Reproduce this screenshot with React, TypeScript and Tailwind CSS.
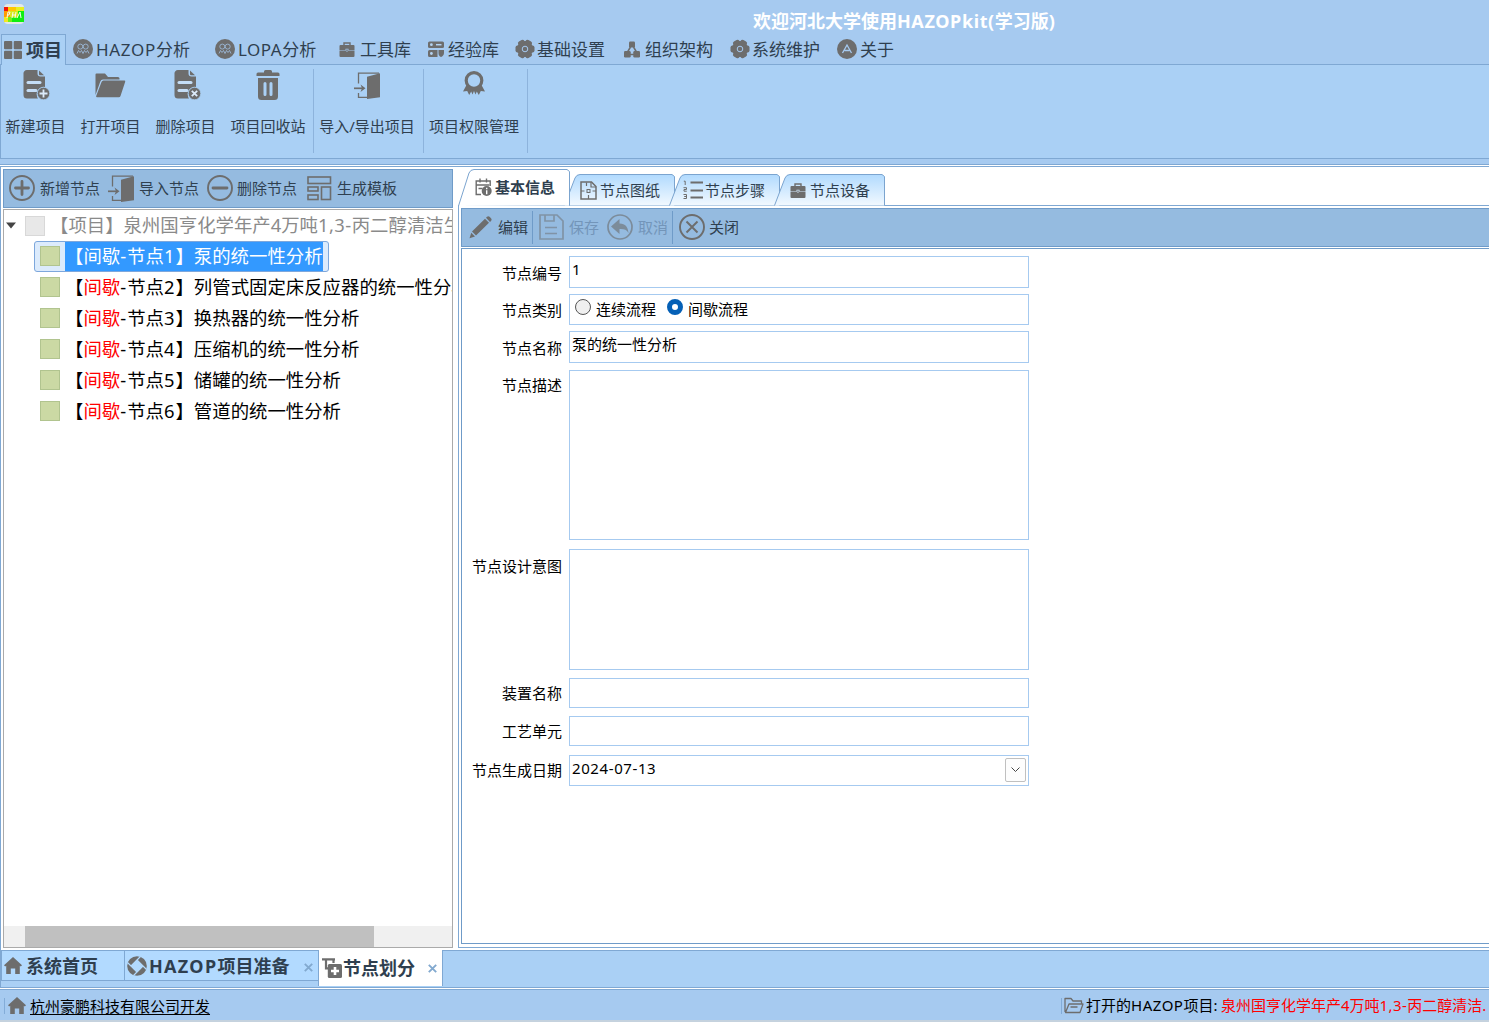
import React from "react";

const G = "#6d6d6d";
type P = { children?: React.ReactNode; className?: string };

function Svg({ w, h, vb, children, className = "" }: P & { w: number; h: number; vb?: string }) {
  return (
    <svg width={w} height={h} viewBox={vb ?? `0 0 ${w} ${h}`} fill="none" className={`block shrink-0 ${className}`}>
      {children}
    </svg>
  );
}

const AppLogo = () => (
  <Svg w={20} h={20}>
    <rect x="0" y="0" width="20" height="20" rx="4" fill="#e3e8e6" />
    <path d="M0 3h20v4H0z" fill="#ffc800" />
    <path d="M0 3h4v4H0z" fill="#f01808" />
    <path d="M12 3h8v4h-8z" fill="#e8f020" />
    <path d="M0 7h6v6H0z" fill="#ff9c00" />
    <path d="M6 7h8v6H6z" fill="#d8e81c" />
    <path d="M0 13h4v5H0z" fill="#f2e820" />
    <path d="M4 13h10v5H4z" fill="#70f01c" />
    <path d="M14 7h6v11H8v-4h6z" fill="#10ee10" />
    <path d="M3 14l1-6h2l-1 3H4M8 14l1-6M12 8l-1 6M8.500 11h3M13 14l3-6 1 6" stroke="#f4fff0" strokeWidth="1" />
  </Svg>
);
const GridIcon = () => (
  <Svg w={18} h={18}>
    <g fill={G}>
      <rect x="0" y="0" width="8.300" height="8.300" rx="1" />
      <rect x="9.700" y="0" width="8.300" height="8.300" rx="1" />
      <rect x="0" y="9.700" width="8.300" height="8.300" rx="1" />
      <rect x="9.700" y="9.700" width="8.300" height="8.300" rx="1" />
    </g>
  </Svg>
);
const PeopleIcon = () => (
  <Svg w={20} h={20}>
    <circle cx="10" cy="10" r="10" fill={G} />
    <g stroke="#a6caf0" strokeWidth="0.7">
      <circle cx="7.300" cy="7.600" r="2.500" />
      <circle cx="12.700" cy="7.600" r="2.500" />
      <path d="M4 14.500l1.500-3 1.500 2 1.500-2 1.500 3 1.500-3 1.500 2 1.500-2 1.500 3" />
    </g>
  </Svg>
);
const Toolbox = () => (
  <Svg w={16} h={15}>
    <path d="M5 3.500V1h6v2.500" stroke={G} strokeWidth="1.400" />
    <path d="M1.500 3h13a1 1 0 0 1 1 1v4h-6V6.700h-3V8h-6V4a1 1 0 0 1 1-1z" fill={G} />
    <path d="M.5 8.600h6.100l1.400 1.300 1.400-1.300h6.100V14a1 1 0 0 1-1 1h-13a1 1 0 0 1-1-1z" fill={G} />
    <path d="M7.200 7.500h1.600v1L8 9.200l-.8-.7z" fill={G} />
  </Svg>
);
const ServerIcon = () => (
  <Svg w={16} h={16}>
    <rect x="0" y="0.500" width="16" height="6.500" rx="1.500" fill={G} />
    <path d="M1.500 9h8v7h-8A1.500 1.500 0 0 1 0 14.500v-4A1.500 1.500 0 0 1 1.500 9zM10.500 9H16v3c0 2-1.500 3.500-3 4-1.500-.5-2.500-2-2.500-4z" fill={G} />
    <circle cx="3.400" cy="3.700" r="1.400" fill="#b4d3f2" />
    <circle cx="3.400" cy="12.500" r="1.400" fill="#b4d3f2" />
    <path d="M8 3.700h5.500" stroke="#b4d3f2" strokeWidth="1.500" />
  </Svg>
);
const Gear = () => (
  <Svg w={20} h={20}>
    <g fill={G}>
      <circle cx="10" cy="10" r="8" />
      <rect x="0.500" y="6.500" width="19" height="7" rx="2" />
      <rect x="0.500" y="6.500" width="19" height="7" rx="2" transform="rotate(60 10 10)" />
      <rect x="0.500" y="6.500" width="19" height="7" rx="2" transform="rotate(120 10 10)" />
    </g>
    <circle cx="10" cy="10" r="2.800" stroke="#a6caf0" strokeWidth="1" />
  </Svg>
);
const OrgIcon = () => (
  <Svg w={16} h={17}>
    <g fill={G}>
      <rect x="5" y="0.500" width="6" height="6" rx="1.200" />
      <rect x="0" y="10" width="6.700" height="6.500" rx="1.200" />
      <rect x="9.300" y="10" width="6.700" height="6.500" rx="1.200" />
    </g>
    <path d="M6.500 6L3.500 11M9.500 6l3 5M6 13.500h4" stroke={G} strokeWidth="1.500" />
  </Svg>
);
const AboutIcon = () => (
  <Svg w={20} h={20}>
    <circle cx="10" cy="10" r="10" fill={G} />
    <path d="M5.500 14L10 6l4.500 8M7.500 11.500h5" stroke="#a6caf0" strokeWidth="1.300" />
  </Svg>
);
const DocIcon = ({ del = false }) => (
  <Svg w={27} h={30}>
    <path d="M4 0h10.500v3.500A3 3 0 0 0 17.500 6.500H22V17a7.500 7.500 0 0 0-7 11.500H4a3.500 3.500 0 0 1-3.500-3.500V4A3.500 3.500 0 0 1 4 0z" fill={G} />
    <path d="M16 .5l5 4.700h-4a1 1 0 0 1-1-1z" fill={G} />
    <rect x="3.500" y="11" width="15" height="3" rx="1.500" fill="#c4ddf6" />
    <rect x="3.500" y="19" width="11" height="3" rx="1.500" fill="#c4ddf6" />
    <circle cx="20.500" cy="23.500" r="6.300" fill={G} stroke="#aad0f5" strokeWidth=".8" />
    <path d={del ? "M17.800 20.800l5.400 5.400M23.200 20.800l-5.400 5.400" : "M20.500 19.500v8M16.500 23.500h8"} stroke="#dcebfa" strokeWidth="1.800" />
  </Svg>
);
const FolderIcon = () => (
  <Svg w={31} h={25}>
    <path d="M.5 22V1.500a1 1 0 0 1 1-1H10L13 4h10a1.500 1.500 0 0 1 1.500 1.500V6.500H8a3 3 0 0 0-2.700 2z" fill={G} />
    <path d="M8.500 7.500h20.700a1 1 0 0 1 1 1.300L25.500 23a1.800 1.800 0 0 1-1.700 1.200H2.200a1 1 0 0 1-1-1.300L6.500 9a2.200 2.200 0 0 1 2-1.500z" fill={G} />
  </Svg>
);
const TrashIcon = () => (
  <Svg w={24} h={30}>
    <path d="M8 2.500V1.500A1.500 1.500 0 0 1 9.500 0h5A1.500 1.500 0 0 1 16 1.500v1h6A1.500 1.500 0 0 1 23.500 4v2H.5V4A1.500 1.500 0 0 1 2 2.500z" fill={G} />
    <path d="M2 8h20v18.500a3.500 3.500 0 0 1-3.500 3.500h-13A3.500 3.500 0 0 1 2 26.500z" fill={G} />
    <path d="M9 13.500v11M15 13.500v11" stroke="#aad0f5" strokeWidth="3" strokeLinecap="round" />
  </Svg>
);
const DoorIcon = () => (
  <Svg w={26} h={27}>
    <path d="M4.500 11.500V1.200H25M4.500 21v4.300h9" stroke={G} strokeWidth="1.300" />
    <path d="M13 4.800L26 1.200v24L13 27z" fill={G} />
    <path d="M0 16.300h9" stroke={G} strokeWidth="1.700" />
    <path d="M6.500 12.500l5 3.800-5 3.800 1.500-3.800z" fill={G} />
  </Svg>
);
const MedalIcon = () => (
  <Svg w={22} h={25}>
    <circle cx="11" cy="9.500" r="7.800" stroke={G} strokeWidth="3.200" />
    <path d="M3.800 13.500L0 20.500l4.200-.6 2 4.100 2-3.500 1.300 3 1.500-3.500 1.500 3.500 1.300-3 2 3.500 2-4.100 4.200.6-3.800-7-7.200 4z" fill={G} />
  </Svg>
);
const CircleIcon = ({ kind }: { kind: "plus" | "minus" | "x" }) => (
  <Svg w={26} h={26}>
    <circle cx="13" cy="13" r="12" stroke={G} strokeWidth="1.900" />
    {kind === "x" ? (
      <path d="M7.500 7.500l11 11M18.500 7.500l-11 11" stroke={G} strokeWidth="1.900" />
    ) : (
      <path d={kind === "plus" ? "M6.500 13h13M13 6.500v13" : "M6 13h14"} stroke={G} strokeWidth="2.800" strokeLinecap="round" />
    )}
  </Svg>
);
const TemplateIcon = () => (
  <Svg w={25} h={25}>
    <g stroke={G} strokeWidth="1.600">
      <rect x="1" y="1" width="22.500" height="6.500" />
      <rect x="1" y="11" width="10" height="4" />
      <rect x="1" y="19" width="10" height="4.500" />
      <rect x="14.500" y="11" width="9" height="12.500" />
    </g>
  </Svg>
);
const InfoDoc = () => (
  <Svg w={17} h={18}>
    <path d="M6 16.500H1.200V3h14v5M1.200 7h13M5 0.500v4M11.500 0.500v4M3.500 10.500h4" stroke={G} strokeWidth="1.400" />
    <circle cx="11.700" cy="13" r="5" fill={G} />
    <path d="M11.700 9.800v1.500M11.700 12.300v4" stroke="#fff" strokeWidth="1.400" />
  </Svg>
);
const Drawing = () => (
  <Svg w={17} h={19}>
    <path d="M1 1h10.500L16 5.500V18H1z" stroke={G} strokeWidth="1.500" />
    <path d="M11 1v5h5M6.500 1.500v3.500M1 10h3.500M12.500 10H16M8.500 14V18" stroke={G} strokeWidth="1.200" />
    <rect x="7" y="8.500" width="3" height="3" stroke={G} />
  </Svg>
);
const Steps = () => (
  <Svg w={21} h={20}>
    <path d="M7.500 2.500h12.500M7.500 10.500h12.500M7.500 17.500h12.500" stroke={G} strokeWidth="2" />
    <path d="M.8 1.200h1.400V5M.5 7.700h3v1.800H1v1.700h2.800M.5 14.500h3v4H.5M1.200 16.500h2" stroke={G} strokeWidth="1" />
  </Svg>
);
const Pencil = () => (
  <Svg w={23} h={23}>
    <path d="M17 1.800l1-1a2 2 0 0 1 2.600 0l1.400 1.400a2 2 0 0 1 0 2.700l-1 1zM16 2.800l4 4L7 19.500l-4-4zM2.300 16.700l3.700 3.700L.5 22.300z" fill={G} />
  </Svg>
);
const SaveIcon = () => (
  <Svg w={25} h={26} className="opacity-50">
    <path d="M1 1h17l6 6v18H1zM6 1v6h9V1M6 13.500h12M6 19.500h12" stroke={G} strokeWidth="1.700" />
  </Svg>
);
const UndoIcon = () => (
  <Svg w={26} h={26} className="opacity-60">
    <circle cx="13" cy="13" r="12" stroke={G} strokeWidth="1.700" />
    <path d="M4 12.500L12.500 5v4.500c6 .3 8.500 3.500 9 9.500-2-3.500-4.500-4.200-9-4v5z" fill={G} />
  </Svg>
);
const Home = () => (
  <Svg w={18} h={17}>
    <path d="M9 0l9 8.200-1.200 1.300-1-.8V17h-4.600v-5.500H6.800V17H2.200V8.700l-1 .8L0 8.200z" fill={G} />
  </Svg>
);
const Aperture = () => (
  <Svg w={20} h={20}>
    <circle cx="10" cy="10" r="9.800" fill={G} />
    <path d="M10 4L16 10 10 16 4 10z" fill="#b2daff" />
    <path d="M4 10L13.500.500M10 4L19.500 13.500M16 10L6.500 19.500M10 16L.500 6.500" stroke="#b2daff" strokeWidth="1.200" />
  </Svg>
);
const NodeIcon = () => (
  <Svg w={20} h={20}>
    <path d="M0 1.300h13M4 1v9.300h3M11.500 1v4" stroke={G} strokeWidth="2.200" />
    <rect x="5.800" y="6" width="14.200" height="14" rx="1.500" fill={G} />
    <path d="M13 9v8M9 13h8" stroke="#fff" strokeWidth="2.600" />
  </Svg>
);
const OpenFolder = () => (
  <Svg w={20} h={17}>
    <path d="M1 15V1.500h6L9 4h8.500v3M1.500 15.500L5 7h14l-3 8.500zM6.500 10h7" stroke={G} strokeWidth="1.300" strokeLinejoin="round" />
  </Svg>
);

const menus: [React.FC, React.ReactNode, string, string][] = [
  [PeopleIcon, <><span className="tracking-[0.7px]">HAZOP</span>分析</>, "w-[142px]", "gap-[3px]"],
  [PeopleIcon, <><span className="tracking-[0.5px]">LOPA</span>分析</>, "w-[124px]", "gap-[3px]"],
  [Toolbox, "工具库", "w-[89px]", "gap-[5px]"],
  [ServerIcon, "经验库", "w-[87px]", "gap-[4px]"],
  [Gear, "基础设置", "w-[109px]", "gap-[2px]"],
  [OrgIcon, "组织架构", "w-[106px]", "gap-[5px]"],
  [Gear, "系统维护", "w-[107px]", "gap-[2px]"],
  [AboutIcon, "关于", "w-[80px]", "gap-[3px]"],
];

function Action({ label, children, className = "" }: P & { label: string }) {
  return (
    <div className={`flex shrink-0 flex-col items-center ${className}`}>
      <div className="flex h-[30px] items-center">{children}</div>
      <span className="mt-[15px] leading-[22px]">{label}</span>
    </div>
  );
}

function Tab({ label, children, className = "" }: P & { label: string }) {
  return (
    <div className={`relative h-[32px] w-[111px] shrink-0 ${className}`}>
      <svg width="111" height="32" className="absolute inset-0">
        <defs>
          <linearGradient id="tabfill" x1="0" y1="0" x2="0" y2="1">
            <stop offset="0" stopColor="#b1dafe" />
            <stop offset="1" stopColor="#f2f9ff" />
          </linearGradient>
        </defs>
        <path d="M.5 31.500L11 4Q12.500.5 16 .5H108L110.500 2.500V31.500" fill="url(#tabfill)" stroke="#7ba4cf" />
      </svg>
      <div className="relative flex h-[32px] items-center">{children}<span className="leading-[20px]">{label}</span></div>
    </div>
  );
}

function Row({ label, h, mt, lp, children }: P & { label: string; h: string; mt: string; lp: string }) {
  return (
    <div className={`flex ${mt}`}>
      <span className={`w-[100px] shrink-0 text-right leading-[20px] ${lp}`}>{label}</span>
      <div className={`ml-[7px] w-[460px] shrink-0 border border-[#a6caf0] bg-white ${h}`}>{children}</div>
    </div>
  );
}

const nodes = ["列管式固定床反应器的统一性分析", "换热器的统一性分析", "压缩机的统一性分析", "储罐的统一性分析", "管道的统一性分析"];

export default function App() {
  return (
    <div className="flex h-[1022px] w-[1489px] flex-col overflow-hidden whitespace-nowrap bg-white font-['Noto_Sans','Noto_Sans_CJK_SC',sans-serif] text-[15px] text-[#2f3f4f]">
      <header className="h-[64px] shrink-0 bg-[#a6caf0]">
        <div className="flex h-[34px]">
          <div className="ml-[4px] mt-[4px] w-[749px]"><AppLogo /></div>
          <h1 className="mt-[9px] text-[18px] font-bold leading-[24px] text-white">欢迎河北大学使用<span className="tracking-[0.6px]">HAZOPkit(</span>学习版)</h1>
        </div>
        <nav className="flex text-[17px] leading-[24px]">
          <div className="relative z-10 ml-px mr-[7px] flex h-[31px] w-[65px] shrink-0 items-center gap-[4px] border border-b-0 border-[#7fa8d3] bg-[#aad0f5] pl-[2px] text-[18px] font-bold">
            <GridIcon /><span>项目</span>
          </div>
          {menus.map(([Icon, label, w, gap], i) => (
            <div key={i} className={`flex h-[30px] shrink-0 items-center ${w} ${gap}`}><Icon /><span className="pt-[2px]">{label}</span></div>
          ))}
        </nav>
      </header>

      <section className="flex h-[95px] shrink-0 border border-r-0 border-[#7fa8d3] bg-[#aad0f5] pt-[5px]">
        <Action label="新建项目" className="w-[69px]"><span className="ml-[2px]"><DocIcon /></span></Action>
        <Action label="打开项目" className="ml-[3px] w-[75px]"><FolderIcon /></Action>
        <Action label="删除项目" className="w-[75px]"><span className="ml-[3px]"><DocIcon del /></span></Action>
        <Action label="项目回收站" className="w-[90px]"><TrashIcon /></Action>
        <i className="mt-[-1px] h-[84px] w-px bg-[#8db3dc]" />
        <Action label="导入/导出项目" className="mr-[3px] w-[106px]"><DoorIcon /></Action>
        <i className="mt-[-1px] h-[84px] w-px bg-[#8db3dc]" />
        <Action label="项目权限管理" className="mr-[3px] w-[100px]"><span className="mb-[3px]"><MedalIcon /></span></Action>
        <i className="mt-[-1px] h-[84px] w-px bg-[#8db3dc]" />
      </section>
      <div className="h-[6px] shrink-0 border-b border-[#7fa8d3] bg-[#a6caf0]" />
      <div className="h-[2px] shrink-0 border-b border-[#7fa8d3]" />

      <main className="flex h-[783px] shrink-0 border-l border-[#7fa8d3]">
        <aside className="ml-[2px] mt-[2px] w-[450px] shrink-0">
          <div className="flex h-[39px] items-center border border-[#6f9bc8] bg-[#95bbe0] pb-px pl-[5px]">
            <div className="flex w-[99px] items-center gap-[5px]"><CircleIcon kind="plus" />新增节点</div>
            <div className="flex w-[99px] items-center gap-[5px]"><DoorIcon />导入节点</div>
            <div className="flex w-[100px] items-center gap-[4px]"><CircleIcon kind="minus" />删除节点</div>
            <div className="flex items-center gap-[5px]"><TemplateIcon />生成模板</div>
          </div>
          <div className="mt-px flex h-[739px] flex-col overflow-hidden border border-[#aaa] bg-white text-[18.4px] leading-[26px] text-black">
            <div className="flex h-[31px] shrink-0 items-center text-[#8a8a8a]">
              <Svg w={10} h={7} className="ml-[2px]"><path d="M0 .5h10L5 6.500z" fill="#444" /></Svg>
              <i className="ml-[9px] mr-[5px] block size-[20px] shrink-0 border border-[#d8d8d8] bg-[#e8e8e8]" />
              <span className="pb-[2px]">【项目】泉州国亨化学年产4万吨<span className="tracking-[0.45px]">1,3-</span>丙二醇清洁生产项目</span>
            </div>
            <div className="ml-[30px] flex h-[31px] w-[295px] shrink-0 items-center rounded-[3px] border border-[#7da7dc] bg-[#dcebfc]">
              <i className="mb-[2px] ml-[5px] mr-[5px] block size-[20px] shrink-0 border border-[#b1c48f] bg-[#cbd9a4]" />
              <span className="h-[29px] w-[258px] bg-[#3399ff] leading-[27px] text-white">【间歇<span className="tracking-[1px]">-</span>节点<span className="tracking-[1px]">1</span>】泵的统一性分析</span>
            </div>
            {nodes.map((n, i) => (
              <div key={n} className="flex h-[31px] shrink-0 items-center pb-[2px]">
                <i className="ml-[36px] mr-[5px] block size-[20px] shrink-0 border border-[#b1c48f] bg-[#cbd9a4]" />
                <span>【<span className="text-[#f00]">间歇</span><span className="tracking-[1px]">-</span>节点<span className="tracking-[1px]">{i + 2}</span>】{n}</span>
              </div>
            ))}
            <div className="mt-auto flex h-[21px] shrink-0 bg-[#f0f0f0]"><i className="ml-[21px] w-[349px] bg-[#c0c0c0]" /></div>
          </div>
        </aside>

        <section className="ml-[5px] min-w-0 flex-1 pt-[2px]">
          <div className="relative z-10 flex h-[37px] items-end">
            <div className="relative z-10 h-[37px] w-[112px] shrink-0">
              <svg width="112" height="37" className="absolute inset-0">
                <path d="M.5 37L11 4Q12.500.5 16 .5H109L111.500 2.500V36.500H112" fill="#fff" stroke="#7ba4cf" />
              </svg>
              <div className="relative flex h-[35px] items-center gap-[3px] pl-[17px] font-bold"><InfoDoc /><span className="leading-[20px]">基本信息</span></div>
            </div>
            <Tab label="节点图纸" className="ml-[-6px] pl-[16px]"><Drawing /><i className="w-[3px]" /></Tab>
            <Tab label="节点步骤" className="ml-[-6px] pl-[14px]"><Steps /><i className="w-px" /></Tab>
            <Tab label="节点设备" className="ml-[-6px] pl-[16px]"><Toolbox /><i className="w-[4px]" /></Tab>
            <i className="h-px flex-1 bg-[#7fa8d3]" />
          </div>
          <div className="mt-[-1px] h-[743px] border border-r-0 border-[#7fa8d3] pl-[2px] pt-[2px]">
            <div className="flex h-[39px] items-center border border-r-0 border-[#6f9bc8] bg-[#95bbe0] pb-px pl-[7px]">
              <Pencil /><span className="ml-[6px] mr-[4px]">编辑</span>
              <i className="h-[33px] w-px bg-[#6f9bc8]" />
              <div className="ml-[6px] flex w-[68px] items-center gap-[5px] text-[#7395b9]"><SaveIcon />保存</div>
              <div className="flex w-[65px] items-center gap-[5px] text-[#7395b9]"><UndoIcon />取消</div>
              <i className="h-[33px] w-px bg-[#6f9bc8]" />
              <div className="ml-[6px] flex items-center gap-[4px]"><CircleIcon kind="x" />关闭</div>
            </div>
            <div className="mt-px h-[696px] border border-r-0 border-[#6f9bc8] text-black">
              <Row label="节点编号" mt="mt-[7px]" h="h-[32px]" lp="pt-[7px]"><span className="block pl-[2px] leading-[25px]">1</span></Row>
              <Row label="节点类别" mt="mt-[6px]" h="h-[31px]" lp="pt-[6px]">
                <div className="flex pl-[5px]">
                  <i className="mt-[4px] block size-[16px] rounded-full border border-[#555] bg-[#f0f0f0]" />
                  <span className="ml-[5px] mt-[4px] w-[71px] leading-[20px]">连续流程</span>
                  <i className="mt-[4px] block size-[16px] rounded-full border-[5px] border-[#0560b6] bg-white" />
                  <span className="ml-[5px] mt-[4px] leading-[20px]">间歇流程</span>
                </div>
              </Row>
              <Row label="节点名称" mt="mt-[6px]" h="h-[32px]" lp="pt-[7px]"><span className="block pl-[2px] leading-[24px]">泵的统一性分析</span></Row>
              <Row label="节点描述" mt="mt-[7px]" h="h-[170px]" lp="pt-[5px]" />
              <Row label="节点设计意图" mt="mt-[9px]" h="h-[121px]" lp="pt-[7px]" />
              <Row label="装置名称" mt="mt-[8px]" h="h-[30px]" lp="pt-[5px]" />
              <Row label="工艺单元" mt="mt-[8px]" h="h-[30px]" lp="pt-[5px]" />
              <Row label="节点生成日期" mt="mt-[9px]" h="h-[31px]" lp="pt-[5px]">
                <div className="flex justify-between pl-[2px] pr-[2px]">
                  <span className="leading-[25px] tracking-[0.6px]">2024-07-13</span>
                  <span className="mt-[2px] flex h-[24px] w-[21px] items-center justify-center rounded-[2px] border border-[#c0c0c0] bg-[#fdfdfd]">
                    <Svg w={9} h={6}><path d="M.5.500l4 4 4-4" stroke="#444" /></Svg>
                  </span>
                </div>
              </Row>
            </div>
          </div>
        </section>
      </main>

      <div className="flex h-[38px] shrink-0 border-y border-l border-[#7fa8d3] bg-[#aad0f5] text-[18px] font-bold leading-[26px]">
        <div className="flex h-[30px] w-[124px] items-center gap-[4px] border-b border-l border-r border-[#7fa8d3] bg-[#b2daff] pl-[2px]"><Home />系统首页</div>
        <div className="flex h-[30px] w-[193px] items-center border-b border-[#7fa8d3] bg-[#b2daff] pl-[2px]">
          <Aperture /><span className="ml-[2px] w-[155px]"><span className="tracking-[1.3px]">HAZOP</span>项目准备</span>
          <Svg w={9} h={9} className="mt-[3px]"><path d="M.8.800l7.400 7.400M8.200.800L.8 8.200" stroke="#82a9cf" strokeWidth="1.900" /></Svg>
        </div>
        <div className="relative mt-[-1px] flex h-[36px] w-[125px] items-center border-x border-[#7fa8d3] bg-white pl-[3px]">
          <NodeIcon /><span className="ml-[1px] w-[85px]">节点划分</span>
          <Svg w={9} h={9}><path d="M.8.800l7.400 7.400M8.200.800L.8 8.200" stroke="#82a9cf" strokeWidth="1.900" /></Svg>
        </div>
      </div>
      <footer className="mt-px flex h-[33px] shrink-0 items-center border-b-2 border-t border-b-[#c5d2de] border-t-[#7fa8d3] bg-[#a6caf0] pt-px text-black">
        <i className="ml-[4px] h-[16px] w-px bg-[#83acd8]" />
        <div className="ml-[3px] flex w-[1053px] items-center gap-[4px]"><Home /><span className="leading-[20px] underline underline-offset-2">杭州豪鹏科技有限公司开发</span></div>
        <i className="h-[16px] w-px bg-[#83acd8]" />
        <span className="ml-[2px]"><OpenFolder /></span>
        <span className="ml-[2px] w-[135px]">打开的<span className="tracking-[0.5px]">HAZOP</span>项目:</span>
        <span className="text-[#f00]">泉州国亨化学年产4万吨<span className="tracking-[0.4px]">1,3-</span>丙二醇清洁.</span>
      </footer>
    </div>
  );
}
